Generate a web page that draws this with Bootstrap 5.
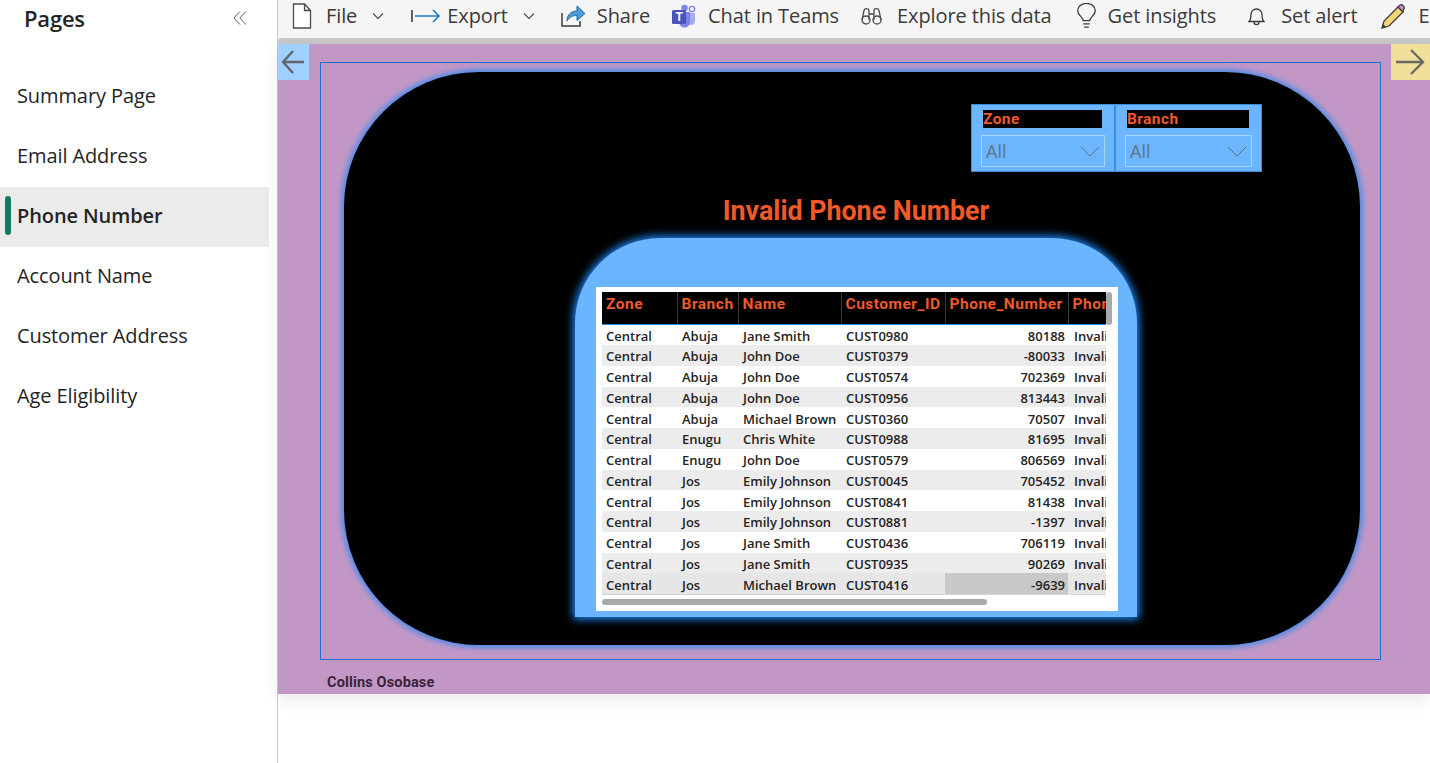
<!DOCTYPE html>
<html lang="en">
<head>
  <meta charset="UTF-8">
  <title>Phone Number - Report</title>
  <link href="https://cdn.jsdelivr.net/npm/bootstrap@5.3.0/dist/css/bootstrap.min.css" rel="stylesheet">
  <style>
    html, body { height: 100%; overflow: hidden; }
    body { font-family: "Open Sans", "Noto Sans", sans-serif; color: #252423; background: #fff; }
    .app-shell { height: 763px; }

    /* pages pane */
    .pages-pane { width: 278px; flex: none; border-right: 1px solid #c8c8c8; }
    .pages-head { height: 38px; padding: 0 30px 2px 24px; }
    .pages-title { font-size: 22px; font-weight: 600; letter-spacing: -.2px; }
    .pages-list { margin-top: 29px; }
    .page-link { height: 60px; width: 269px; padding: 0 0 2px 17px; font-size: 20px; letter-spacing: -.1px; color: #252423; position: relative; }
    .page-link.is-active { background: #ebebeb; font-weight: 600; }
    .page-link.is-active::before { content: ""; position: absolute; left: 5px; top: 9px; width: 6px; height: 39px; border-radius: 3px; background: #117865; }

    /* toolbar */
    .report-area { width: 1152px; flex: none; }
    .tool-bar { height: 38px; padding-bottom: 6px; background: #f5f5f5; overflow: hidden; white-space: nowrap; font-size: 20px; letter-spacing: -.1px; color: #3b3a39; }
    .tool-item { flex: none; }
    .tool-gap { height: 6px; background: #c8c8c8; border-radius: 3px 0 0 0; }

    /* report canvas */
    .report-canvas { height: 650px; position: relative; background: #c297c6; padding: 18px 49px 0 42px; box-shadow: 0 6px 16px rgba(0,0,0,.09); }
    .nav-arrow { position: absolute; top: 0; height: 36px; padding-bottom: 1px; }
    .nav-arrow.back { left: 0; width: 31px; background: #9fd0ff; padding-right: 2px; }
    .nav-arrow.next { right: 0; width: 39px; background: #f0e09a; padding-right: 2px; }
    .canvas-frame { height: 598px; border: 1px solid #1f6fd0; padding: 9px 20px 14px 23px; }
    .dark-shape { height: 573px; background: #000; border-radius: 135px; box-shadow: 0 0 6px 2px #2f8bf0; }
    .slicer-row { padding: 32px 98px 0 0; }
    .slicer-box { height: 68px; background: #6cb6ff; border: 1px solid #3b8fdc; padding: 5px 9px 0; }
    .slicer-zone { width: 144px; }
    .slicer-branch { width: 147px; }
    .slicer-label { height: 18px; background: #000; color: #f0592a; font-family: "Roboto", sans-serif; font-weight: 700; font-size: 15.5px; letter-spacing: .4px; line-height: 18px; margin: 0 3px 7px 2px; }
    .slicer-select { height: 32px; border: 1px solid rgba(255,255,255,.4); padding: 0 4px; color: #5f7387; font-size: 18px; }
    .report-title { margin: 23px 0 11px 8px; height: 32px; line-height: 32px; text-align: center; font-family: "Roboto", sans-serif; font-weight: 700; font-size: 26.8px; color: #ef5a28; }
    .table-panel { width: 562px; height: 379px; margin-left: 231px; background: #6bb5ff; border-radius: 85px 85px 0 0; box-shadow: 0 0 8px 2px #1f8cff; padding: 49px 19px 6px 21px; }
    .table-visual { height: 324px; background: #fff; padding: 5px 6px; position: relative; }
    .table-clip { width: 504px; overflow: hidden; }
    .data-grid { width: 642px; table-layout: fixed; border-collapse: collapse; font-size: 13px; font-weight: 600; color: #252423; }
    .data-grid th { height: 32px; background: #000; color: #ef5a28; font-family: "Roboto", sans-serif; font-weight: 700; font-size: 15.5px; letter-spacing: .5px; padding: 0 4px 6px; border-left: 1px solid #3a3a3a; border-bottom: 1px solid #1f8cff; white-space: nowrap; }
    .data-grid th:first-child { border-left: 0; }
    .data-grid td { height: 20.75px; padding: 3px 4px 0 5px; white-space: nowrap; overflow: hidden; line-height: 1; }
    .data-grid td:first-child { padding-left: 4px; }
    .data-grid td:last-child { padding-left: 6px; }
    .data-grid td.text-end { padding-right: 3px; }
    .data-grid tbody tr:first-child td { height: 21px; padding-top: 4px; }
    .data-grid tbody tr:nth-child(even) td { background: #ececec; }
    .data-grid tbody tr:last-child td { background: #e6e6e6; border-bottom: 1px solid #d4d4d4; padding-top: 4px; }
    .data-grid tbody tr:last-child td.cell-picked { background: #c8c8c8; }
    .thumb-v { position: absolute; left: 510px; top: 5px; width: 6px; height: 33px; border-radius: 3px; background: #a9a9a9; }
    .thumb-h { position: absolute; left: 6px; top: 312px; width: 385px; height: 6px; border-radius: 3px; background: #a9a9a9; }
    .author-note { margin: 12px 0 0 7px; font-family: "Roboto", sans-serif; font-weight: 700; font-size: 14.5px; letter-spacing: .15px; color: #3a2438; }
  </style>
</head>
<body>
  <div class="app-shell d-flex">
    <!-- Pages pane -->
    <aside class="pages-pane">
      <div class="pages-head d-flex align-items-center justify-content-between">
        <span class="pages-title">Pages</span>
        <svg width="14" height="14" viewBox="0 0 14 14" fill="none" stroke="#605e5c" stroke-width="1"><path d="M7 .5 .8 7 7 13.5M13 .5 6.8 7 13 13.5"/></svg>
      </div>
      <div class="pages-list">
        <div class="page-link d-flex align-items-center">Summary Page</div>
        <div class="page-link d-flex align-items-center">Email Address</div>
        <div class="page-link is-active d-flex align-items-center">Phone Number</div>
        <div class="page-link d-flex align-items-center">Account Name</div>
        <div class="page-link d-flex align-items-center">Customer Address</div>
        <div class="page-link d-flex align-items-center">Age Eligibility</div>
      </div>
    </aside>

    <main class="report-area">
      <!-- Toolbar -->
      <div class="tool-bar d-flex align-items-center">
        <div class="tool-item d-flex align-items-center" style="margin-left:14px">
          <svg width="20" height="26" viewBox="0 0 20 26" fill="#fff" stroke="#4a4a4a" stroke-width="1.3"><path d="M1.500 1h11l6 6.500V25h-17zM12.500 1v6.500h6"/></svg>
          <span style="margin-left:14px">File</span>
          <svg style="margin-left:15px" width="12" height="8" viewBox="0 0 12 8" fill="none" stroke="#4a4a4a" stroke-width="1.1"><path d="M1 1.500 6 6.500 11 1.500"/></svg>
        </div>
        <div class="tool-item d-flex align-items-center" style="margin-left:27px">
          <svg width="30" height="16" viewBox="0 0 30 16" fill="none" stroke-width="1.6"><path d="M1 2v12" stroke="#3b3a39"/><path d="M4 8h24M22 2l6 6-6 6" stroke="#1f7fc4"/></svg>
          <span style="margin-left:6px">Export</span>
          <svg style="margin-left:15px" width="12" height="8" viewBox="0 0 12 8" fill="none" stroke="#4a4a4a" stroke-width="1.1"><path d="M1 1.500 6 6.500 11 1.500"/></svg>
        </div>
        <div class="tool-item d-flex align-items-center" style="margin-left:26px">
          <svg width="25" height="24" viewBox="0 0 25 24"><path d="M1 9v13h18v-5" fill="none" stroke="#3b3a39" stroke-width="1.5"/><path d="M6 17c0-7 5-10 10-10V2l8 7.500-8 7v-5c-4 0-7 1-10 5.500z" fill="#4f9bd9" stroke="#1b6aa8" stroke-width="1"/></svg>
          <span style="margin-left:11px">Share</span>
        </div>
        <div class="tool-item d-flex align-items-center" style="margin-left:22px">
          <svg width="24" height="25" viewBox="0 0 24 25"><circle cx="20" cy="5" r="2.600" fill="none" stroke="#7b83eb" stroke-width="1.4"/><circle cx="12.500" cy="4" r="3.200" fill="#7b83eb"/><path d="M15 9h8v8a4 4 0 0 1-8 0z" fill="#a6abf0"/><path d="M7 8h11v10a5.500 5.500 0 0 1-11 0z" fill="#7b83eb"/><rect x="0" y="6" width="14" height="14" rx="1.500" fill="#4b53bc"/><text x="7" y="17" text-anchor="middle" font-family="Liberation Sans, sans-serif" font-weight="700" font-size="12" fill="#fff">T</text></svg>
          <span style="margin-left:12px">Chat in Teams</span>
        </div>
        <div class="tool-item d-flex align-items-center" style="margin-left:22px">
          <svg width="21" height="18" viewBox="0 0 21 18" fill="none" stroke="#4a4a4a" stroke-width="1.3"><circle cx="5" cy="13" r="4"/><circle cx="16" cy="13" r="4"/><path d="M1 13 3 3.500C3.500 1 7.500 1 8 3.500V13M20 13 18 3.500C17.500 1 13.500 1 13 3.500V13M8 7h5"/></svg>
          <span style="margin-left:15px">Explore this data</span>
        </div>
        <div class="tool-item d-flex align-items-center" style="margin-left:24px">
          <svg width="21" height="26" viewBox="0 0 21 28" fill="none" stroke="#3b3a39" stroke-width="1.4"><path d="M7 19c0-4-6-5-6-11a9.500 7.500 0 0 1 19 0c0 6-6 7-6 11z"/><path d="M7 22.500h7M8 26h5"/></svg>
          <span style="margin-left:11px">Get insights</span>
        </div>
        <div class="tool-item d-flex align-items-center" style="margin-left:32px">
          <svg width="17" height="20" viewBox="0 0 17 20" fill="none" stroke="#3b3a39" stroke-width="1.3"><path d="M1 15.500c2-2 2-4 2-7a5.500 5.500 0 0 1 11 0c0 3 0 5 2 7z"/><path d="M6 16c0 3.500 5 3.500 5 0"/></svg>
          <span style="margin-left:16px">Set alert</span>
        </div>
        <div class="tool-item d-flex align-items-center" style="margin-left:24px">
          <svg width="24" height="25" viewBox="0 0 24 25"><path d="M1 24l2-7L17 3l5 5L8 22z" fill="#f2d675" stroke="#3b3a39" stroke-width="1.3"/><path d="M17 3l1.500-1.500a2.500 2.500 0 0 1 3.500 0l.5.5a2.500 2.500 0 0 1 0 3.500L22 8z" fill="#c98ad1" stroke="#3b3a39" stroke-width="1.1"/><path d="M1 24l1-4 3 3z" fill="#3b3a39"/></svg>
          <span style="margin-left:13px">Edit</span>
        </div>
      </div>
      <div class="tool-gap"></div>

      <!-- Report canvas -->
      <section class="report-canvas">
        <div class="nav-arrow back d-flex align-items-center justify-content-center">
          <svg width="24" height="26" viewBox="0 0 24 26" fill="none" stroke="#5f6670" stroke-width="2.400"><path d="M23 13H2M12 2 2 13l10 11"/></svg>
        </div>
        <div class="nav-arrow next d-flex align-items-center justify-content-center">
          <svg width="30" height="28" viewBox="0 0 30 28" fill="none" stroke="#6a6a68" stroke-width="2.400"><path d="M1 14h27M16 2l12 12-12 12"/></svg>
        </div>

        <div class="canvas-frame">
          <div class="dark-shape">
            <div class="slicer-row d-flex justify-content-end">
              <div class="slicer-box slicer-zone">
                <div class="slicer-label">Zone</div>
                <div class="slicer-select d-flex align-items-center justify-content-between">
                  <span>All</span>
                  <svg width="20" height="11" viewBox="0 0 20 11" fill="none" stroke="#5f7387" stroke-width="1"><path d="M1 1l9 9 9-9"/></svg>
                </div>
              </div>
              <div class="slicer-box slicer-branch">
                <div class="slicer-label">Branch</div>
                <div class="slicer-select d-flex align-items-center justify-content-between">
                  <span>All</span>
                  <svg width="20" height="11" viewBox="0 0 20 11" fill="none" stroke="#5f7387" stroke-width="1"><path d="M1 1l9 9 9-9"/></svg>
                </div>
              </div>
            </div>

            <div class="report-title">Invalid Phone Number</div>

            <div class="table-panel">
              <div class="table-visual">
                <div class="table-clip">
                  <table class="data-grid">
                    <colgroup>
                      <col style="width:75px"><col style="width:61px"><col style="width:103px"><col style="width:104px"><col style="width:123px"><col style="width:176px">
                    </colgroup>
                    <thead>
                      <tr><th>Zone</th><th>Branch</th><th>Name</th><th>Customer_ID</th><th>Phone_Number</th><th>Phone_Status</th></tr>
                    </thead>
                    <tbody>
                      <tr><td>Central</td><td>Abuja</td><td>Jane Smith</td><td>CUST0980</td><td class="text-end">80188</td><td>Invalid</td></tr>
                      <tr><td>Central</td><td>Abuja</td><td>John Doe</td><td>CUST0379</td><td class="text-end">-80033</td><td>Invalid</td></tr>
                      <tr><td>Central</td><td>Abuja</td><td>John Doe</td><td>CUST0574</td><td class="text-end">702369</td><td>Invalid</td></tr>
                      <tr><td>Central</td><td>Abuja</td><td>John Doe</td><td>CUST0956</td><td class="text-end">813443</td><td>Invalid</td></tr>
                      <tr><td>Central</td><td>Abuja</td><td>Michael Brown</td><td>CUST0360</td><td class="text-end">70507</td><td>Invalid</td></tr>
                      <tr><td>Central</td><td>Enugu</td><td>Chris White</td><td>CUST0988</td><td class="text-end">81695</td><td>Invalid</td></tr>
                      <tr><td>Central</td><td>Enugu</td><td>John Doe</td><td>CUST0579</td><td class="text-end">806569</td><td>Invalid</td></tr>
                      <tr><td>Central</td><td>Jos</td><td>Emily Johnson</td><td>CUST0045</td><td class="text-end">705452</td><td>Invalid</td></tr>
                      <tr><td>Central</td><td>Jos</td><td>Emily Johnson</td><td>CUST0841</td><td class="text-end">81438</td><td>Invalid</td></tr>
                      <tr><td>Central</td><td>Jos</td><td>Emily Johnson</td><td>CUST0881</td><td class="text-end">-1397</td><td>Invalid</td></tr>
                      <tr><td>Central</td><td>Jos</td><td>Jane Smith</td><td>CUST0436</td><td class="text-end">706119</td><td>Invalid</td></tr>
                      <tr><td>Central</td><td>Jos</td><td>Jane Smith</td><td>CUST0935</td><td class="text-end">90269</td><td>Invalid</td></tr>
                      <tr><td>Central</td><td>Jos</td><td>Michael Brown</td><td>CUST0416</td><td class="text-end cell-picked">-9639</td><td>Invalid</td></tr>
                    </tbody>
                  </table>
                </div>
                <div class="thumb-v"></div>
                <div class="thumb-h"></div>
              </div>
            </div>
          </div>
        </div>

        <div class="author-note">Collins Osobase</div>
      </section>
    </main>
  </div>

  <script src="https://cdn.jsdelivr.net/npm/bootstrap@5.3.0/dist/js/bootstrap.bundle.min.js"></script>
</body>
</html>
